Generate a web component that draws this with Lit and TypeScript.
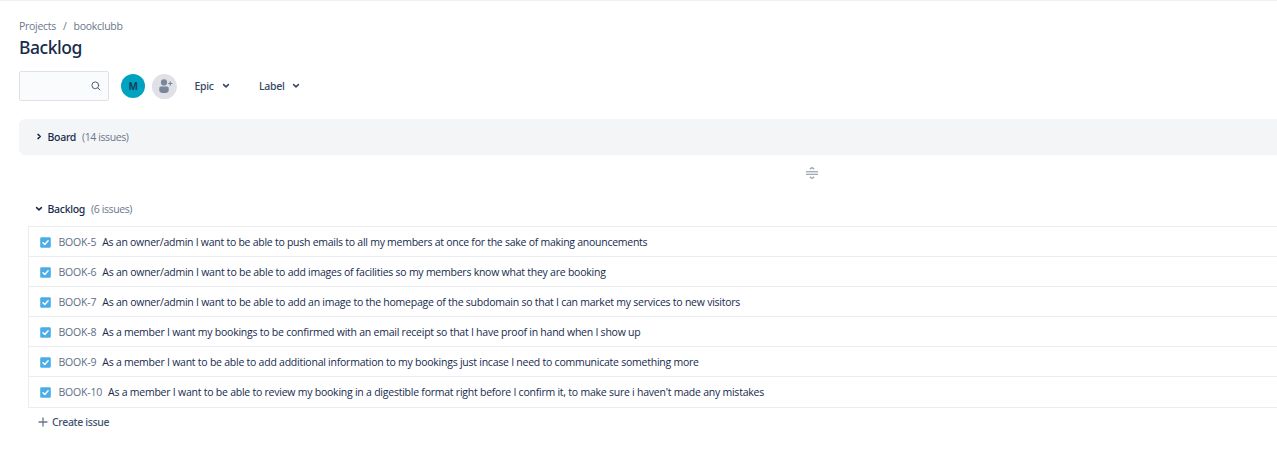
import { LitElement, html, css } from "lit";
import { customElement } from "lit/decorators.js";

interface Issue {
  key: string;
  title: string;
  fit: number;
}

const ISSUES: Issue[] = [
  { key: "BOOK-5", title: "As an owner/admin I want to be able to push emails to all my members at once for the sake of making anouncements", fit: -0.259 },
  { key: "BOOK-6", title: "As an owner/admin I want to be able to add images of facilities so my members know what they are booking", fit: -0.24 },
  { key: "BOOK-7", title: "As an owner/admin I want to be able to add an image to the homepage of the subdomain so that I can market my services to new visitors", fit: -0.241 },
  { key: "BOOK-8", title: "As a member I want my bookings to be confirmed with an email receipt so that I have proof in hand when I show up", fit: -0.24 },
  { key: "BOOK-9", title: "As a member I want to be able to add additional information to my bookings just incase I need to communicate something more", fit: -0.24 },
  { key: "BOOK-10", title: "As a member I want to be able to review my booking in a digestible format right before I confirm it, to make sure i haven't made any mistakes", fit: -0.236 },
];

const chevronDown = html`<svg class="chev" width="8" height="6" viewBox="0 0 8 6"><path d="M1.6 1.6 4 3.9 6.4 1.6" /></svg>`;

@customElement("app-root")
export class AppRoot extends LitElement {
  static styles = css`
    :host {
      display: block;
      box-sizing: border-box;
      width: 100%;
      height: 476px;
      overflow: hidden;
      background: #fff;
      border-top: 1px solid #f1f1f3;
      font-family: "Open Sans", "Noto Sans", sans-serif;
      font-size: 10.5px;
      line-height: 14px;
      letter-spacing: -0.2px;
      color: #172b4d;
      white-space: nowrap;
    }
    svg { display: block; flex: none; fill: none; }
    .page { padding: 18px 0 0 19px; }
    .crumbs { display: flex; color: #6b778c; height: 14px; letter-spacing: -0.28px; }
    .crumbs .sep { margin: 0 7px; }
    h1 {
      margin: 2px 0 0;
      font-family: "Noto Sans", sans-serif;
      font-size: 17.5px;
      line-height: 24px;
      font-weight: 500;
      letter-spacing: -0.45px;
    }
    .tools { display: flex; align-items: center; height: 30px; margin-top: 12px; color: #42526e; }
    .search {
      box-sizing: border-box;
      width: 90px;
      height: 30px;
      border: 1px solid #dfe1e6;
      border-radius: 2px;
      background: #fafbfc;
      display: flex;
      align-items: center;
      justify-content: flex-end;
      padding-right: 6px;
    }
    .avatar {
      width: 24px;
      height: 24px;
      margin-left: 12px;
      border-radius: 50%;
      background: #00a3bf;
      color: #10405f;
      font-size: 10px;
      font-weight: 700;
      text-align: center;
      line-height: 25px;
    }
    .people { margin: 1px 0 0 6px; }
    .filter { display: flex; align-items: center; color: #344563; font-family: "Noto Sans", sans-serif; font-weight: 500; letter-spacing: -0.3px; }
    .epic { margin-left: 17.5px; width: 64.5px; }
    .epic span { width: 27px; }
    .label span { width: 33px; }
    .chev { stroke: #344563; stroke-width: 1.5; stroke-linecap: round; stroke-linejoin: round; }
    .board {
      display: flex;
      align-items: center;
      height: 36px;
      margin-top: 18px;
      padding-left: 16px;
      background: #f4f5f7;
      border-radius: 6px 0 0 6px;
    }
    .name { font-family: "Noto Sans", sans-serif; font-weight: 500; letter-spacing: -0.3px; }
    .head .chev, .board .chev { stroke: #172b4d; }
    .board .name { margin-left: 4.5px; }
    .count { color: #6b778c; margin-left: 6px; letter-spacing: -0.4px; }
    .divider { height: 36px; padding-left: 787px; display: flex; align-items: center; }
    .head { display: flex; align-items: center; height: 36px; padding-left: 16px; }
    .head .name { margin-left: 4.5px; }
    .list { margin: -1px 0 0 9px; border: 1px solid #ebecf0; border-right: 0; }
    .issue {
      box-sizing: border-box;
      height: 30px;
      display: flex;
      align-items: center;
      padding: 1px 0 0 11px;
      border-bottom: 1px solid #ebecf0;
    }
    .issue:last-child { border-bottom: 0; padding-bottom: 1px; }
    .key { color: #5e6c84; margin: 0 6px 0 7.5px; }
    .create { display: flex; align-items: center; height: 28px; padding-left: 19px; color: #42526e; font-family: "Noto Sans", sans-serif; font-weight: 500; letter-spacing: -0.34px; }
    .create span { margin-left: 4px; }
  `;

  render() {
    return html`
      <div class="page">
        <div class="crumbs"><span>Projects</span><span class="sep">/</span><span>bookclubb</span></div>
        <h1>Backlog</h1>
        <div class="tools">
          <div class="search">
            <svg width="12" height="12" viewBox="0 0 12 12" stroke="#505f79" stroke-width="1" stroke-linecap="round"><circle cx="5.3" cy="5.3" r="3.4" /><path d="M8 8 10 10" /></svg>
          </div>
          <div class="avatar">M</div>
          <svg class="people" width="26" height="26" viewBox="0 0 26 26">
            <circle cx="13.400" cy="12.600" r="12.500" fill="#dfe1e6" />
            <g fill="#7a869a">
              <circle cx="13" cy="8.400" r="3.100" />
              <path d="M8.300 14.100a1.500 1.500 0 0 1 1.500-1.500h6.400a1.500 1.500 0 0 1 1.500 1.500v2.400c0 1.800-2.200 2.600-4.700 2.600s-4.700-.8-4.700-2.600z" />
              <path d="M18.700 7.400h1.200v1.500h1.500v1.200h-1.500v1.500h-1.200v-1.500h-1.500v-1.200h1.500z" />
            </g>
          </svg>
          <div class="filter epic"><span>Epic</span>${chevronDown}</div>
          <div class="filter label"><span>Label</span>${chevronDown}</div>
        </div>
        <div class="board">
          <svg class="chev" width="8" height="8" viewBox="0 0 8 8"><path d="M3 1.400 5.300 3.500 3 5.600" /></svg>
          <span class="name">Board</span><span class="count">(14 issues)</span>
        </div>
        <div class="divider">
          <svg width="12" height="16" viewBox="0 0 12 16" stroke="#a5adba" stroke-width="1.200">
            <rect x="0" y="6" width="12" height="4" fill="#dfe1e6" stroke="none" />
            <path d="M0 6.500H12M0 9.500H12" />
            <path d="M3.800 4.200 6 2.600 8.200 4.200M3.800 11.800 6 13.400 8.200 11.800" stroke-width="1.500" />
          </svg>
        </div>
        <div class="head">${chevronDown}<span class="name">Backlog</span><span class="count">(6 issues)</span></div>
        <div class="list">
          ${ISSUES.map((i) => html`
            <div class="issue">
              <svg width="11" height="11" viewBox="0 0 11 11"><rect x="0.200" y="0.200" width="10.600" height="10.600" rx="1.400" fill="#4bade8" /><path d="M3 5.700 4.800 7.400 8.100 3.700" stroke="#fff" stroke-width="1.500" stroke-linecap="round" stroke-linejoin="round" /></svg>
              <span class="key">${i.key}</span><span style="letter-spacing:${i.fit}px">${i.title}</span>
            </div>`)}
        </div>
        <div class="create">
          <svg width="10" height="10" viewBox="0 0 10 10" stroke="#6b778c" stroke-width="1.300" stroke-linecap="round"><path d="M5 1V9M1 5H9" /></svg>
          <span>Create issue</span>
        </div>
      </div>`;
  }
}
